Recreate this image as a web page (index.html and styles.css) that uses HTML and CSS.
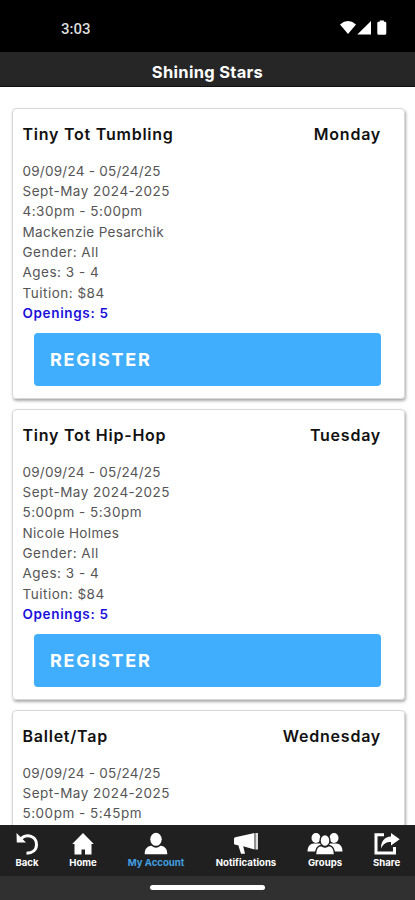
FILE: index.html
```html
<!DOCTYPE html>
<html lang="en">
<head>
<meta charset="utf-8">
<title>Shining Stars</title>
<link rel="stylesheet" href="styles.css">
</head>
<body>
<div class="status">
  <span class="clock">3:03</span>
  <svg class="signals" width="48" height="16" viewBox="0 0 48 16" fill="#fff">
    <path d="M0 4.400Q8 -2.200 16 4.400L8 14Z"/>
    <path d="M17.300 14.500L31 1V14.500Z"/>
    <path d="M37.300 3Q37.300 1.700 38.600 1.700H39.700V0.400H43.900V1.700H45Q46.300 1.700 46.300 3V13.200Q46.300 14.700 44.800 14.700H38.800Q37.300 14.700 37.300 13.200Z"/>
  </svg>
</div>
<header class="header"><h1>Shining Stars</h1></header>
<main class="list">
  <article class="card">
    <div class="top"><h2>Tiny Tot Tumbling</h2><h2>Monday</h2></div>
    <ul class="details">
      <li class="dates">09/09/24 - 05/24/25</li><li>Sept-May 2024-2025</li><li>4:30pm - 5:00pm</li><li class="teacher">Mackenzie Pesarchik</li><li>Gender: All</li><li>Ages: 3 - 4</li><li>Tuition: $84</li><li class="openings">Openings: 5</li>
    </ul>
    <button class="register">REGISTER</button>
  </article>
  <article class="card">
    <div class="top"><h2>Tiny Tot Hip-Hop</h2><h2>Tuesday</h2></div>
    <ul class="details">
      <li class="dates">09/09/24 - 05/24/25</li><li>Sept-May 2024-2025</li><li>5:00pm - 5:30pm</li><li class="teacher">Nicole Holmes</li><li>Gender: All</li><li>Ages: 3 - 4</li><li>Tuition: $84</li><li class="openings">Openings: 5</li>
    </ul>
    <button class="register">REGISTER</button>
  </article>
  <article class="card">
    <div class="top"><h2>Ballet/Tap</h2><h2>Wednesday</h2></div>
    <ul class="details">
      <li class="dates">09/09/24 - 05/24/25</li><li>Sept-May 2024-2025</li><li>5:00pm - 5:45pm</li>
    </ul>
  </article>
</main>
<nav class="tabs">
  <a class="tab"><svg width="24" height="24" viewBox="0 0 24 24"><path d="M6 6.500C12 1.500 21.500 4 21.500 12.500C21.500 18 17.500 21 11.500 21.200" fill="none" stroke="#fff" stroke-width="3"/><path d="M1.500 1L1.800 10.500H11Z" fill="#fff"/></svg><span>Back</span></a>
  <a class="tab"><svg width="24" height="24" viewBox="0 0 24 24" fill="#fff"><path d="M12 1L22.800 12H20.500V22.500H14V17.500H10.500V22.500H3.500V12H1.200Z"/></svg><span>Home</span></a>
  <a class="tab active"><svg width="24" height="24" viewBox="0 0 24 24" fill="#fff"><ellipse cx="12" cy="7.300" rx="5.700" ry="6.500"/><path d="M0.700 22.300C0.700 17 3 14.300 7.500 13.800Q12 17.500 16.500 13.800C21 14.300 23.300 17 23.300 22.300Z"/></svg><span>My Account</span></a>
  <a class="tab"><svg width="26" height="24" viewBox="0 0 26 24" fill="#fff"><path d="M1 6.800Q1 5.500 2.300 5.300L21.500 1V17.500L10.200 14.300L12 21.800H8L5.300 13.300L2.300 12.800Q1 12.500 1 11.500Z"/><path d="M22.400 1H25V17.500H22.400Z" fill="#ddd"/></svg><span>Notifications</span></a>
  <a class="tab"><svg width="36" height="24" viewBox="0 0 36 24" fill="#fff"><ellipse cx="9" cy="6" rx="4.500" ry="5"/><ellipse cx="27" cy="6" rx="4.500" ry="5"/><path d="M0.500 19.500C0.500 14.500 3 11.500 7 11.500H29C33 11.500 35.500 14.500 35.500 19.500Z"/><g stroke="#202020" stroke-width="1.300"><path d="M8.500 23C8.500 17 10 14 14 13.500Q18 16.500 22 13.500C26 14 27.500 17 27.500 23Z"/><ellipse cx="18" cy="8.500" rx="4.900" ry="6"/></g></svg><span>Groups</span></a>
  <a class="tab"><svg width="26" height="24" viewBox="0 0 26 24"><path d="M10 2.800H2V21H20.500V15" fill="none" stroke="#fff" stroke-width="3"/><path d="M17 1L25.700 7.300L17 13.500V10C12 10 9.500 11.500 7 16.500C7 9 10.500 5 17 4.500Z" fill="#fff"/></svg><span>Share</span></a>
</nav>
<footer class="gesture"><div class="pill"></div></footer>
</body>
</html>
```
FILE: styles.css
```css
* { box-sizing: border-box; margin: 0; padding: 0; }
body {
  width: 415px;
  height: 900px;
  overflow: hidden;
  display: flex;
  flex-direction: column;
  background: #fff;
  font-family: Inter, "Liberation Sans", sans-serif;
}
.status {
  height: 52px;
  flex: none;
  background: #000;
  display: flex;
  justify-content: space-between;
  padding: 20px 27px 0 61px;
}
.clock { font: 500 15px/18px Roboto, sans-serif; color: #ddd; }
.header {
  height: 35px;
  flex: none;
  background: #262626;
  border-bottom: 1px solid #111;
  text-align: center;
}
h1 { font-size: 16.5px; line-height: 40px; font-weight: 700; letter-spacing: 0.3px; color: #fff; }
.list {
  flex: 1;
  min-height: 0;
  overflow: hidden;
  padding: 21px 10px 0 11.5px;
}
.card {
  height: 291px;
  margin-bottom: 10px;
  padding: 14px 23px 0 10px;
  border: 1px solid #d8d8d8;
  border-radius: 4px;
  box-shadow: 1px 2px 3px #aaa;
}
.top { display: flex; justify-content: space-between; }
h2 { font-size: 16px; line-height: 22px; font-weight: 600; letter-spacing: 0.76px; color: #111; }
.details {
  list-style: none;
  margin-top: 15.5px;
  font-size: 13.5px;
  line-height: 20.35px;
  letter-spacing: 0.5px;
  color: #555;
}
.dates { letter-spacing: 0.24px; }
.teacher { letter-spacing: 0.33px; }
.openings { color: #1a0fdc; font-weight: 600; letter-spacing: 0.65px; }
.register {
  display: block;
  width: 347px;
  height: 53px;
  margin: 10px 0 0 11.5px;
  padding-left: 16px;
  border: 0;
  border-radius: 4px;
  background: #40aefc;
  color: #fff;
  text-align: left;
  font: 700 18px Inter, sans-serif;
  letter-spacing: 1.7px;
}
.tabs {
  height: 51px;
  flex: none;
  background: #202020;
  display: grid;
  grid-template-columns: 54px 58px 88px 92px 66px 57px;
  padding-top: 7px;
}
.tab {
  display: flex;
  flex-direction: column;
  align-items: center;
  color: #fff;
  font-size: 9.6px;
  line-height: 11px;
  font-weight: 700;
  white-space: nowrap;
}
.tab span { margin-top: 1px; }
.active { color: #409fe0; }
.gesture {
  height: 24px;
  flex: none;
  background: #303030;
  display: flex;
  justify-content: center;
  padding-top: 9px;
}
.pill { width: 115px; height: 5px; border-radius: 3px; background: #fff; }
```
